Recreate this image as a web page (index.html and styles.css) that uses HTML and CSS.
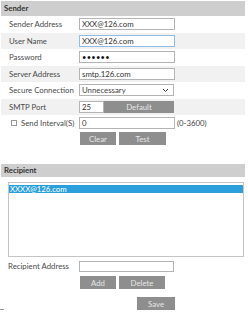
FILE: index.html
```html
<!DOCTYPE html>
<html lang="en">
<head>
    <meta charset="UTF-8">
    <title>Mail Settings</title>
    <link rel="stylesheet" href="styles.css">
</head>
<body>

<div class="page">
    <div class="bar">Sender</div>

    <div class="row">
        <label>Sender Address</label>
        <input type="text" class="field" value="XXX@126.com">
    </div>
    <div class="row alt">
        <label>User Name</label>
        <input type="text" class="field focus" value="XXX@126.com">
    </div>
    <div class="row">
        <label>Password</label>
        <input type="password" class="field" value="123456">
    </div>
    <div class="row alt">
        <label>Server Address</label>
        <input type="text" class="field" value="smtp.126.com">
    </div>
    <div class="row">
        <label>Secure Connection</label>
        <div class="select">
            <span>Unnecessary</span>
            <svg width="7" height="5" viewBox="0 0 7 5"><path d="M1 1 L3.5 3.5 L6 1" fill="none" stroke="#333" stroke-width="1"/></svg>
        </div>
    </div>
    <div class="row alt">
        <label>SMTP Port</label>
        <div class="port-cell">
            <input type="text" class="field port" value="25">
            <button class="btn default-btn">Default</button>
        </div>
    </div>
    <div class="row">
        <label class="check-label"><span class="check"></span>Send Interval(S)</label>
        <div class="interval-cell">
            <input type="text" class="field" value="0">
            <span class="hint">(0-3600)</span>
        </div>
    </div>

    <div class="btns">
        <button class="btn w36">Clear</button>
        <button class="btn w47">Test</button>
    </div>

    <div class="bar recipient-bar">Recipient</div>

    <div class="list">
        <div class="item selected">XXXX@126.com</div>
    </div>

    <div class="row addr-row">
        <label class="addr-label">Recipient Address</label>
        <input type="text" class="field addr" value="">
    </div>

    <div class="btns add-row">
        <button class="btn w36">Add</button>
        <button class="btn w46">Delete</button>
    </div>

    <div class="save-row">
        <span class="dash"></span>
        <button class="btn save">Save</button>
    </div>
</div>

</body>
</html>
```

FILE: styles.css
```css
body {
    margin: 0;
    font-family: Lato, "Open Sans", sans-serif;
    font-size: 7.8px;
    color: #444;
    background: #fff;
}

.page {
    width: 244px;
    margin-left: 1px;
}

.bar {
    margin-top: 1px;
    height: 15px;
    line-height: 15px;
    padding-left: 3px;
    background-color: #cecece;
    font-weight: bold;
    color: #333;
}

.row {
    display: grid;
    grid-template-columns: 78px auto;
    align-items: center;
    height: 16.5px;
}

.row.alt {
    background-color: #f1f1f1;
}

.row label {
    padding-left: 8px;
    color: #4a4a4a;
}

.field {
    box-sizing: border-box;
    width: 96px;
    height: 12px;
    margin: 0;
    padding: 0 2px;
    border: 1px solid #b4b4b4;
    background: #fff;
    font-family: inherit;
    font-size: 7.8px;
    color: #333;
    outline: none;
}

.field.focus {
    border-color: #8fbde8;
}

input[type="password"].field {
    font-size: 7.5px;
    letter-spacing: 0.3px;
    color: #111;
}

.select {
    box-sizing: border-box;
    width: 95px;
    height: 12px;
    border: 1px solid #b4b4b4;
    display: flex;
    align-items: center;
    justify-content: space-between;
    padding: 0 4px 0 2px;
    background: #fff;
}

.port-cell,
.interval-cell {
    display: flex;
    align-items: center;
}

.field.port {
    width: 25px;
}

.btn {
    box-sizing: border-box;
    height: 13px;
    margin: 0;
    padding: 0;
    border: none;
    background-color: #8e8e8e;
    color: #e6e6e6;
    font-family: inherit;
    font-size: 7.8px;
}

.default-btn {
    width: 70px;
    height: 12px;
}

.check-label {
    display: flex;
    align-items: center;
    padding-left: 10px !important;
}

.check {
    box-sizing: border-box;
    width: 6px;
    height: 6px;
    border: 1px solid #999;
    margin-right: 4px;
}

.hint {
    margin-left: 2px;
}

.btns {
    display: flex;
    gap: 3px;
    padding-left: 79px;
    margin-top: 0.5px;
}

.w36 { width: 36px; }
.w47 { width: 47px; }
.w46 { width: 46px; }

.recipient-bar {
    margin-top: 19px;
    height: 13px;
    line-height: 13px;
}

.list {
    box-sizing: border-box;
    margin: 5px 0 0 7px;
    width: 236px;
    height: 75px;
    border: 1px solid #c4c4c4;
    padding: 2px 0 0 0;
}

.item {
    height: 8px;
    line-height: 8px;
    padding-left: 1px;
}

.item.selected {
    background-color: #2b9fdb;
    color: #fff;
}

.addr-row {
    height: 12px;
    margin-top: 3px;
}

.addr-label {
    padding-left: 7px !important;
}

.field.addr {
    width: 95px;
    height: 11px;
}

.add-row {
    margin-top: 4px;
}

.save-row {
    display: flex;
    align-items: flex-end;
    margin-top: 8px;
}

.dash {
    width: 4px;
    height: 1px;
    margin-left: -1px;
    background: #9a9a9a;
}

.save {
    width: 38px;
    margin-left: 133px;
}
```
